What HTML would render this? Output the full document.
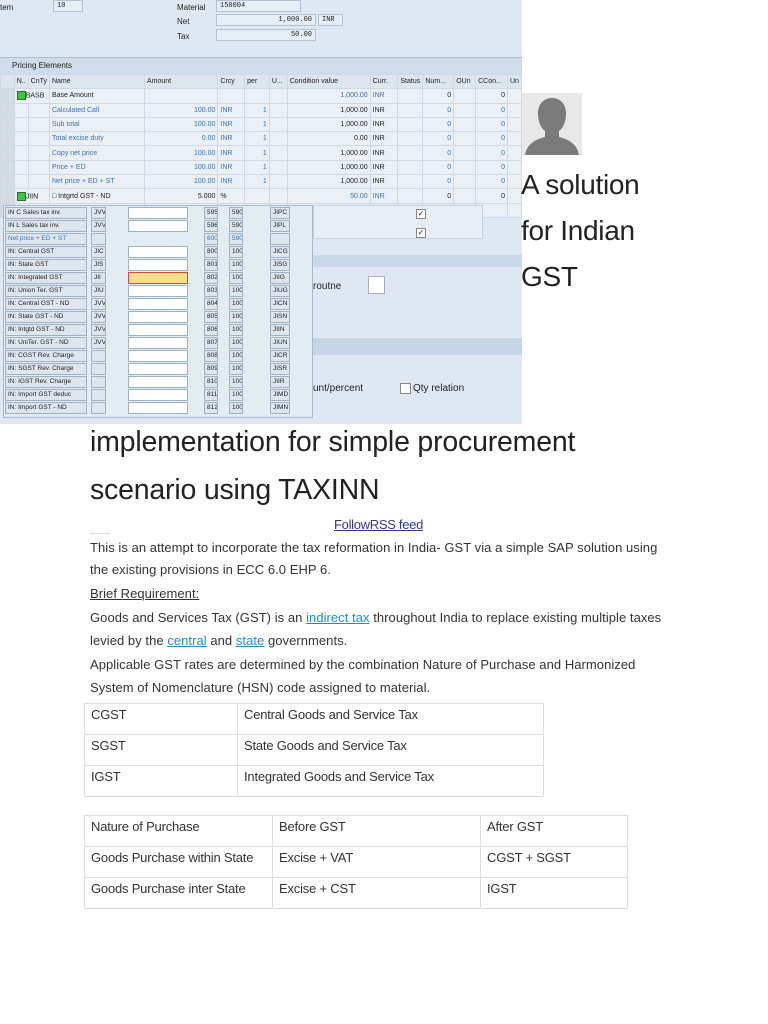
<!DOCTYPE html>
<html><head><meta charset="utf-8"><style>
*{margin:0;padding:0;box-sizing:border-box}
body{width:768px;height:1024px;background:#fff;position:relative;overflow:hidden;font-family:"Liberation Sans",Arial,sans-serif;color:#333}
.a{position:absolute}
.sap{position:absolute;left:0;top:0;width:522px;height:424px;background:#dfe8f2;overflow:hidden;font-size:8px;color:#222}
.fld{position:absolute;background:#e6eef5;border:1px solid #b3c2d2;font-family:"Liberation Mono",monospace;font-size:7px;padding:1px 3px;height:12px;line-height:9px}
table.pe{position:absolute;left:0;top:74px;border-collapse:collapse;table-layout:fixed;font-size:7px}
table.pe td{border:1px solid #cfd9e4;height:14.3px;padding:0 2px;white-space:nowrap;overflow:hidden;background:#eaf0f6}
table.pe td.sel{background:#d4dbe2}
table.pe tr.h td{background:#dde5ee;color:#222}
.bl{color:#3b73b5}
.r{text-align:right}
.grn{display:inline-block;width:9px;height:9px;background:#3cc83c;border:1px solid #2a6a2a;vertical-align:middle}
.pop{position:absolute;left:3px;top:205px;width:310px;height:213px;background:#e3ebf3;border:1px solid #a9b8c8}
.pr{position:absolute;height:12px;font-size:6.5px;line-height:10px}
.pr span{position:absolute;top:0;height:12px;border:1px solid #9fb0c2;background:#dde6ef;padding:0 2px;overflow:hidden;white-space:nowrap}
.pr span.w{background:#fff}
.txt{position:absolute;left:90px;font-size:13px;letter-spacing:0.05px;color:#333;white-space:nowrap}
.lk{color:#1a8fd0;text-decoration:underline}
table.t{position:absolute;border-collapse:collapse;font-size:13px;color:#333;letter-spacing:-0.2px}
table.t td{border:1px solid #ddd;height:31px;vertical-align:top;padding:3px 6px 0 6px}
</style></head><body>
<div class="sap">
 <div class="a" style="left:0;top:3px;font-size:8px">tem</div>
 <div class="fld" style="left:53px;top:0;width:30px">10</div>
 <div class="a" style="left:177px;top:3px">Material</div>
 <div class="fld" style="left:216px;top:0;width:85px">150004</div>
 <div class="a" style="left:177px;top:17px">Net</div>
 <div class="fld" style="left:216px;top:14px;width:100px;text-align:right">1,000.00</div>
 <div class="fld" style="left:318px;top:14px;width:25px">INR</div>
 <div class="a" style="left:177px;top:32px">Tax</div>
 <div class="fld" style="left:216px;top:29px;width:100px;text-align:right">50.00</div>
 <div class="a" style="left:0;top:57px;width:522px;height:17px;background:#cfdceb;border-top:1px solid #a9bdd3"></div>
 <div class="a" style="left:12px;top:61px">Pricing Elements</div>
 <table class="pe">
  <colgroup><col style="width:14px"><col style="width:12px"><col style="width:21px"><col style="width:96px"><col style="width:75px"><col style="width:27px"><col style="width:25px"><col style="width:18px"><col style="width:84px"><col style="width:28px"><col style="width:25px"><col style="width:31px"><col style="width:22px"><col style="width:32px"><col style="width:12px"></colgroup>
  <tr class="h"><td class="sel"></td><td>N..</td><td>CnTy</td><td>Name</td><td>Amount</td><td>Crcy</td><td>per</td><td>U...</td><td>Condition value</td><td>Curr.</td><td>Status</td><td>Num...</td><td>OUn</td><td>CCon...</td><td>Un</td></tr>
  <tr><td class="sel"></td><td colspan="2"><span class="grn"></span>BASB</td><td>Base Amount</td><td></td><td></td><td></td><td></td><td class="r bl">1,000.00</td><td class="bl">INR</td><td></td><td class="r">0</td><td></td><td class="r">0</td><td></td></tr>
  <tr><td class="sel"></td><td></td><td></td><td class="bl">Calculated Call</td><td class="r bl">100.00</td><td class="bl">INR</td><td class="r bl">1</td><td></td><td class="r">1,000.00</td><td>INR</td><td></td><td class="r bl">0</td><td></td><td class="r bl">0</td><td></td></tr>
  <tr><td class="sel"></td><td></td><td></td><td class="bl">Sub total</td><td class="r bl">100.00</td><td class="bl">INR</td><td class="r bl">1</td><td></td><td class="r">1,000.00</td><td>INR</td><td></td><td class="r bl">0</td><td></td><td class="r bl">0</td><td></td></tr>
  <tr><td class="sel"></td><td></td><td></td><td class="bl">Total excise duty</td><td class="r bl">0.00</td><td class="bl">INR</td><td class="r bl">1</td><td></td><td class="r">0.00</td><td>INR</td><td></td><td class="r bl">0</td><td></td><td class="r bl">0</td><td></td></tr>
  <tr><td class="sel"></td><td></td><td></td><td class="bl">Copy net price</td><td class="r bl">100.00</td><td class="bl">INR</td><td class="r bl">1</td><td></td><td class="r">1,000.00</td><td>INR</td><td></td><td class="r bl">0</td><td></td><td class="r bl">0</td><td></td></tr>
  <tr><td class="sel"></td><td></td><td></td><td class="bl">Price + ED</td><td class="r bl">100.00</td><td class="bl">INR</td><td class="r bl">1</td><td></td><td class="r">1,000.00</td><td>INR</td><td></td><td class="r bl">0</td><td></td><td class="r bl">0</td><td></td></tr>
  <tr><td class="sel"></td><td></td><td></td><td class="bl">Net price + ED + ST</td><td class="r bl">100.00</td><td class="bl">INR</td><td class="r bl">1</td><td></td><td class="r">1,000.00</td><td>INR</td><td></td><td class="r bl">0</td><td></td><td class="r bl">0</td><td></td></tr>
  <tr><td class="sel"></td><td colspan="2"><span class="grn"></span>JIIN</td><td>&#9633; Intgrtd GST - ND</td><td class="r">5.000</td><td>%</td><td></td><td></td><td class="r bl">50.00</td><td class="bl">INR</td><td></td><td class="r">0</td><td></td><td class="r">0</td><td></td></tr>
  <tr><td class="sel"></td><td></td><td></td><td></td><td></td><td></td><td></td><td></td><td></td><td></td><td></td><td></td><td></td><td></td><td></td></tr>
 </table>
 <div class="a" style="left:313px;top:205px;width:170px;height:34px;background:#e7eef5;border:1px solid #c6d2de"></div>
 <div class="a" style="left:416px;top:209px;width:10px;height:10px;border:1px solid #888;background:#fff;font-size:8px;line-height:8px;text-align:center">&#10003;</div>
 <div class="a" style="left:416px;top:228px;width:10px;height:10px;border:1px solid #888;background:#fff;font-size:8px;line-height:8px;text-align:center">&#10003;</div>
 <div class="a" style="left:313px;top:255px;width:209px;height:12px;background:#c9d8e8"></div>
 <div class="a" style="left:313px;top:281px;font-size:10px">routne</div>
 <div class="a" style="left:368px;top:276px;width:17px;height:18px;background:#fff;border:1px solid #aab"></div>
 <div class="a" style="left:313px;top:338px;width:209px;height:17px;background:#c5d5e6"></div>
 <div class="a" style="left:313px;top:383px;font-size:10px">unt/percent</div>
 <div class="a" style="left:400px;top:383px;width:11px;height:11px;background:#fff;border:1px solid #888"></div>
 <div class="a" style="left:413px;top:383px;font-size:10px">Qty relation</div>
 <div class="pop">
  <div class="pr" style="top:1px"><span style="left:1px;width:82px">IN C Sales tax inv.</span><span style="left:87px;width:15px">JVV</span><span class="w" style="left:124px;width:60px"></span><span style="left:200px;width:14px">595</span><span style="left:225px;width:14px">590</span><span style="left:266px;width:20px">JIPC</span></div>
  <div class="pr" style="top:14px"><span style="left:1px;width:82px">IN L Sales tax inv.</span><span style="left:87px;width:15px">JVV</span><span class="w" style="left:124px;width:60px"></span><span style="left:200px;width:14px">596</span><span style="left:225px;width:14px">590</span><span style="left:266px;width:20px">JIPL</span></div>
  <div class="pr" style="top:27px"><span class="bl" style="left:1px;width:82px">Net price + ED + ST</span><span style="left:87px;width:15px"></span><span style="left:200px;width:14px" class="bl">600</span><span style="left:225px;width:14px" class="bl">590</span><span style="left:266px;width:20px"></span></div>
  <div class="pr" style="top:40px"><span style="left:1px;width:82px">IN: Central GST</span><span style="left:87px;width:15px">JIC</span><span class="w" style="left:124px;width:60px"></span><span style="left:200px;width:14px">800</span><span style="left:225px;width:14px">100</span><span style="left:266px;width:20px">JICG</span></div>
  <div class="pr" style="top:53px"><span style="left:1px;width:82px">IN: State GST</span><span style="left:87px;width:15px">JIS</span><span class="w" style="left:124px;width:60px"></span><span style="left:200px;width:14px">801</span><span style="left:225px;width:14px">100</span><span style="left:266px;width:20px">JISG</span></div>
  <div class="pr" style="top:66px"><span style="left:1px;width:82px">IN: Integrated GST</span><span style="left:87px;width:15px">JII</span><span style="left:124px;width:60px;background:#f8e08a;border-color:#d44"></span><span style="left:200px;width:14px">802</span><span style="left:225px;width:14px">100</span><span style="left:266px;width:20px">JIIG</span></div>
  <div class="pr" style="top:79px"><span style="left:1px;width:82px">IN: Union Ter. GST</span><span style="left:87px;width:15px">JIU</span><span class="w" style="left:124px;width:60px"></span><span style="left:200px;width:14px">803</span><span style="left:225px;width:14px">100</span><span style="left:266px;width:20px">JIUG</span></div>
  <div class="pr" style="top:92px"><span style="left:1px;width:82px">IN: Central GST - ND</span><span style="left:87px;width:15px">JVV</span><span class="w" style="left:124px;width:60px"></span><span style="left:200px;width:14px">804</span><span style="left:225px;width:14px">100</span><span style="left:266px;width:20px">JICN</span></div>
  <div class="pr" style="top:105px"><span style="left:1px;width:82px">IN: State GST - ND</span><span style="left:87px;width:15px">JVV</span><span class="w" style="left:124px;width:60px"></span><span style="left:200px;width:14px">805</span><span style="left:225px;width:14px">100</span><span style="left:266px;width:20px">JISN</span></div>
  <div class="pr" style="top:118px"><span style="left:1px;width:82px">IN: Intgtd GST - ND</span><span style="left:87px;width:15px">JVV</span><span class="w" style="left:124px;width:60px"></span><span style="left:200px;width:14px">806</span><span style="left:225px;width:14px">100</span><span style="left:266px;width:20px">JIIN</span></div>
  <div class="pr" style="top:131px"><span style="left:1px;width:82px">IN: UniTer. GST - ND</span><span style="left:87px;width:15px">JVV</span><span class="w" style="left:124px;width:60px"></span><span style="left:200px;width:14px">807</span><span style="left:225px;width:14px">100</span><span style="left:266px;width:20px">JIUN</span></div>
  <div class="pr" style="top:144px"><span style="left:1px;width:82px">IN: CGST Rev. Charge</span><span style="left:87px;width:15px"></span><span class="w" style="left:124px;width:60px"></span><span style="left:200px;width:14px">808</span><span style="left:225px;width:14px">100</span><span style="left:266px;width:20px">JICR</span></div>
  <div class="pr" style="top:157px"><span style="left:1px;width:82px">IN: SGST Rev. Charge</span><span style="left:87px;width:15px"></span><span class="w" style="left:124px;width:60px"></span><span style="left:200px;width:14px">809</span><span style="left:225px;width:14px">100</span><span style="left:266px;width:20px">JISR</span></div>
  <div class="pr" style="top:170px"><span style="left:1px;width:82px">IN: IGST Rev. Charge</span><span style="left:87px;width:15px"></span><span class="w" style="left:124px;width:60px"></span><span style="left:200px;width:14px">810</span><span style="left:225px;width:14px">100</span><span style="left:266px;width:20px">JIIR</span></div>
  <div class="pr" style="top:183px"><span style="left:1px;width:82px">IN: Import GST deduc</span><span style="left:87px;width:15px"></span><span class="w" style="left:124px;width:60px"></span><span style="left:200px;width:14px">811</span><span style="left:225px;width:14px">100</span><span style="left:266px;width:20px">JIMD</span></div>
  <div class="pr" style="top:196px"><span style="left:1px;width:82px">IN: Import GST - ND</span><span style="left:87px;width:15px"></span><span class="w" style="left:124px;width:60px"></span><span style="left:200px;width:14px">812</span><span style="left:225px;width:14px">100</span><span style="left:266px;width:20px">JIMN</span></div>
 </div>
</div>

<svg class="a" style="left:522px;top:93px" width="60" height="62" viewBox="0 0 60 62"><rect width="60" height="62" fill="#e8e8e8"/><path d="M3 62 C5 50 15 46 23 44 L23 38 C18 34 16 28 16 20 C16 11 22 5 30 5 C38 5 44 11 44 20 C44 28 42 34 37 38 L37 44 C45 46 55 50 57 62 Z" fill="#7b7b7b"/></svg>

<div class="a" style="left:521px;top:162px;font-size:28px;line-height:46px;color:#222;letter-spacing:-0.3px">A solution<br>for Indian<br>GST</div>
<div class="a" style="left:90px;top:418px;font-size:28.5px;line-height:48px;color:#222;letter-spacing:-0.2px;white-space:nowrap">implementation for simple procurement<br>scenario using TAXINN</div>

<div class="a" style="left:334px;top:517px;font-size:13px;color:#33388a;text-decoration:underline;letter-spacing:-0.3px">FollowRSS feed</div>
<div class="a" style="left:90px;top:533px;width:20px;height:1px;background:#ddd"></div>
<div class="txt" style="top:540px">This is an attempt to incorporate the tax reformation in India- GST via a simple SAP solution using</div>
<div class="txt" style="top:562px">the existing provisions in ECC 6.0 EHP 6.</div>
<div class="txt" style="top:586px;text-decoration:underline">Brief Requirement:</div>
<div class="txt" style="top:610px">Goods and Services Tax (GST) is an <span class="lk">indirect tax</span> throughout India to replace existing multiple taxes</div>
<div class="txt" style="top:633px">levied by the <span class="lk">central</span> and <span class="lk">state</span> governments.</div>
<div class="txt" style="top:657px">Applicable GST rates are determined by the combination Nature of Purchase and Harmonized</div>
<div class="txt" style="top:680px">System of Nomenclature (HSN) code assigned to material.</div>

<table class="t" style="left:84px;top:703px;width:460px">
<tr><td style="width:153px">CGST</td><td>Central Goods and Service Tax</td></tr>
<tr><td>SGST</td><td>State Goods and Service Tax</td></tr>
<tr><td>IGST</td><td>Integrated Goods and Service Tax</td></tr>
</table>
<table class="t" style="left:84px;top:815px;width:544px">
<tr><td style="width:188px">Nature of Purchase</td><td style="width:208px">Before GST</td><td>After GST</td></tr>
<tr><td>Goods Purchase within State</td><td>Excise + VAT</td><td>CGST + SGST</td></tr>
<tr><td>Goods Purchase inter State</td><td>Excise + CST</td><td>IGST</td></tr>
</table>
</body></html>
